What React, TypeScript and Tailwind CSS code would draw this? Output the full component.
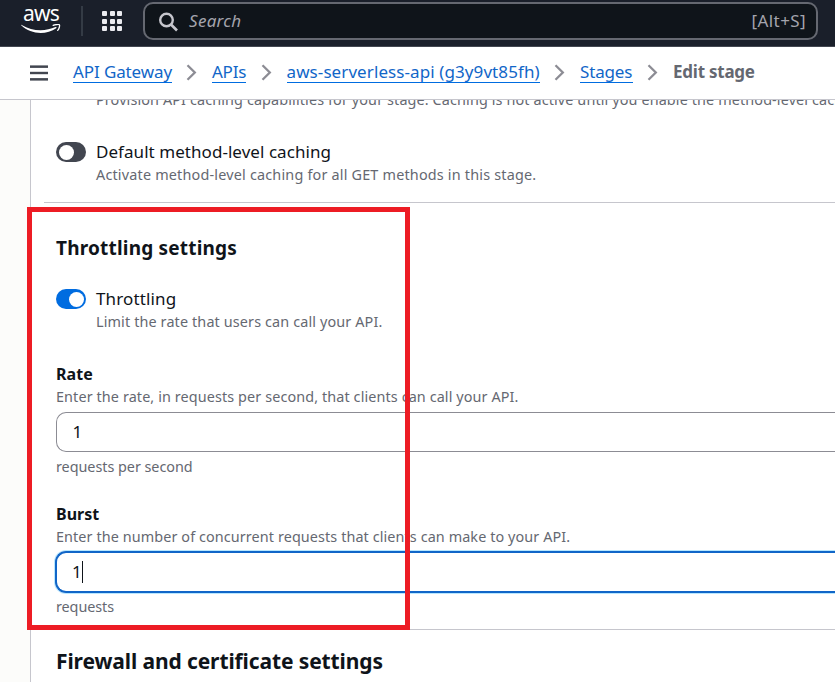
import type { ReactNode } from "react";

function AwsLogo() {
  return (
    <div className="flex w-[40px] flex-col items-center">
      <span className="h-[21px] text-[21px] leading-[20px] tracking-[-0.7px] text-white">aws</span>
      <svg className="block" width="40" height="10" viewBox="0 0 40 10" fill="none">
        <path d="M.7.900C6.500 4.400 13 6.200 19.500 6.200c5.300 0 10.500-1.200 15-3.100.8-.3 1.500.5.7 1.100C31 7.200 25 8.900 19.700 8.900 12.500 8.900 5.700 6.300.4 1.500 0 1.100.3.700.7.900Z" fill="white" />
        <path d="M32.200 1.400c2-.9 5.600-1.200 6.200-.6.500.6-.100 4-1.700 5.600" stroke="white" strokeWidth="1.300" strokeLinecap="round" />
      </svg>
    </div>
  );
}

function AppGrid() {
  return (
    <div className="grid grid-cols-3 gap-[2.500px]">
      {Array.from({ length: 9 }, (_, i) => (
        <span key={i} className="size-[5px] rounded-[1px] bg-[#ebebf0]" />
      ))}
    </div>
  );
}

function Chevron() {
  return (
    <svg className="block shrink-0" width="12" height="18" viewBox="0 0 12 18" fill="none">
      <path d="M1.500 2.300 8.800 9.500 1.500 16.700" stroke="#8c8c94" strokeWidth="2.300" />
    </svg>
  );
}

function Crumb({ className, children }: { className: string; children: ReactNode }) {
  return (
    <a className={`h-[23px] shrink-0 border-b border-[#006ce0] text-[17px] leading-[23px] whitespace-nowrap text-[#1166c8] ${className}`}>
      {children}
    </a>
  );
}

function Hint({ className, children }: { className: string; children: ReactNode }) {
  return <p className={`text-[14.4px] leading-[23px] whitespace-nowrap text-[#656871] ${className}`}>{children}</p>;
}

function Toggle({ on }: { on?: boolean }) {
  return on ? (
    <span className="mt-0.5 flex h-5 w-[30px] shrink-0 items-center justify-end rounded-full bg-[#006ce0] pr-[2px]">
      <span className="size-[15px] rounded-full bg-white" />
    </span>
  ) : (
    <span className="mt-0.5 flex h-5 w-[30px] shrink-0 items-center rounded-full bg-[#424650] pl-[3px]">
      <span className="size-[15px] rounded-full bg-white" />
    </span>
  );
}

export default function App() {
  return (
    <div className="relative flex h-[682px] w-[835px] flex-col overflow-hidden bg-white font-['Noto_Sans',sans-serif] text-[#0f141a]">
      <header className="flex h-[47px] shrink-0 border-b border-[#424650] bg-[#1a1f2a] pl-[21px]">
        <div className="pt-[3px]">
          <AwsLogo />
        </div>
        <div className="mt-1.5 ml-5 h-[30px] w-[2px] bg-[#343b45]" />
        <div className="mt-[11px] ml-[19px]">
          <AppGrid />
        </div>
        <div className="mt-[2px] ml-[21px] flex h-[38px] w-[675px] items-center rounded-[10px] border-2 border-[#656871] bg-[#0f141a] pr-[10px] pl-[14px] text-[17px] leading-[23px]">
          <svg className="mt-px block" width="20" height="20" viewBox="0 0 20 20" fill="none">
            <circle cx="7.500" cy="8" r="6.300" stroke="#c6c6cd" strokeWidth="2.400" />
            <path d="m12 12.500 6 6" stroke="#c6c6cd" strokeWidth="2.600" />
          </svg>
          <span className="mb-0.5 ml-2.5 tracking-[0.3px] text-[#a4a4ad] italic">Search</span>
          <span className="mb-0.5 ml-auto tracking-[0.4px] text-[#a4a4ad]">[Alt+S]</span>
        </div>
      </header>

      <nav className="flex h-[53px] shrink-0 items-start border-b border-[#c6c6cd] pt-[13px] pl-[30px]">
        <svg className="mt-[5px] block" width="18" height="16" viewBox="0 0 18 16" fill="#424650">
          <rect y=".4" width="18" height="2.500" />
          <rect y="6.800" width="18" height="2.400" />
          <rect y="13.100" width="18" height="2.500" />
        </svg>
        <div className="ml-[25px] flex items-center">
          <Crumb className="w-[99px] tracking-[-0.11px]">API Gateway</Crumb>
          <span className="mr-[14px] ml-[14px]"><Chevron /></span>
          <Crumb className="w-[34px] tracking-[-0.26px]">APIs</Crumb>
          <span className="mr-[14px] ml-[14.500px]"><Chevron /></span>
          <Crumb className="w-[253.500px] tracking-[0.09px]">aws-serverless-api (g3y9vt85fh)</Crumb>
          <span className="mr-[14px] ml-[14px]"><Chevron /></span>
          <Crumb className="w-[53px] tracking-[-0.15px]">Stages</Crumb>
          <span className="mr-[14px] ml-[14px]"><Chevron /></span>
          <span className="text-[17px] leading-[23px] font-bold tracking-[-0.24px] whitespace-nowrap text-[#656871]">Edit stage</span>
        </div>
      </nav>

      <div className="flex min-h-0 flex-1 overflow-hidden">
        <aside className="w-[31px] shrink-0 border-r border-[#c6c6cd] bg-[#fcfcfa]" />
        <main className="flex min-w-0 flex-1 flex-col overflow-hidden">
          <section className="flex h-[102px] shrink-0 flex-col pl-[25px]">
            <Hint className="-mt-3 ml-10 tracking-[0.12px]">
              Provision API caching capabilities for your stage. Caching is not active until you enable the method-level cache.
            </Hint>
            <div className="mt-[29px] flex gap-2.5">
              <Toggle />
              <div>
                <p className="text-[17px] leading-[23px] tracking-[0.05px]">Default method-level caching</p>
                <Hint className="tracking-[0.19px]">Activate method-level caching for all GET methods in this stage.</Hint>
              </div>
            </div>
          </section>

          <section className="ml-[13px] h-[427px] shrink-0 border-t border-[#c6c6cd] pt-8 pl-3">
            <h2 className="text-[19px] leading-[26px] font-bold tracking-[0.19px]">Throttling settings</h2>
            <div className="mt-[26px] flex gap-2.5">
              <Toggle on />
              <div>
                <p className="text-[17px] leading-[23px] tracking-[0.13px]">Throttling</p>
                <Hint className="tracking-[0.13px]">Limit the rate that users can call your API.</Hint>
              </div>
            </div>

            <div className="mt-[30px]">
              <label className="block text-[16px] leading-[22px] font-bold tracking-[0.1px]">Rate</label>
              <Hint className="tracking-[0.105px]">Enter the rate, in requests per second, that clients can call your API.</Hint>
              <div className="mt-1 flex h-10 items-center rounded-l-[10px] border border-r-0 border-[#8c8c94] pb-px pl-[15.500px] text-[17px] leading-[23px]">
                1
              </div>
              <Hint className="mt-[3px] tracking-[-0.04px]">requests per second</Hint>
            </div>

            <div className="mt-[25px]">
              <label className="block text-[16px] leading-[22px] font-bold">Burst</label>
              <Hint className="tracking-[0.095px]">Enter the number of concurrent requests that clients can make to your API.</Hint>
              <div className="mt-[3px] -ml-px flex h-[42px] items-center rounded-l-[11px] border-2 border-r-0 border-[#1166c8] pb-px pl-[15px] text-[17px] leading-[23px] shadow-[0_0_0_1px_#b8e7ff]">
                1<span className="h-[22px] w-px bg-[#0f141a]" />
              </div>
              <Hint className="mt-[2px] tracking-[-0.08px]">requests</Hint>
            </div>
          </section>

          <section className="ml-[13px] shrink-0 border-t border-[#c6c6cd] pt-[17px] pl-3">
            <h2 className="text-[21px] leading-[28px] font-bold tracking-[-0.11px] whitespace-nowrap">Firewall and certificate settings</h2>
          </section>
        </main>
      </div>

      <div className="pointer-events-none absolute top-[207px] left-[27px] h-[423px] w-[383px] border-5 border-[#ed1c24]" />
    </div>
  );
}
